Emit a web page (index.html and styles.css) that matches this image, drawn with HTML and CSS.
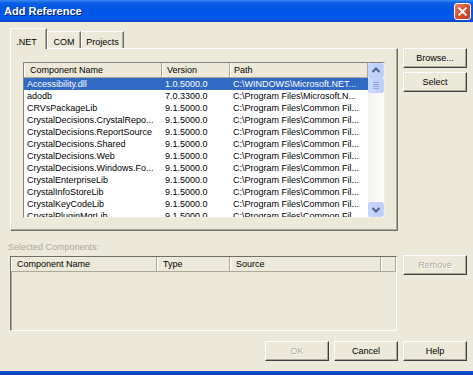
FILE: index.html
```html
<!DOCTYPE html>
<html lang="en">
<head>
  <meta charset="UTF-8" />
  <title>Add Reference</title>
  <link rel="stylesheet" href="styles.css">
</head>
<body>
  <div class="window">

    <!-- Title bar -->
    <div class="titlebar">
      <span class="title">Add Reference</span>
      <span class="close">
        <svg width="16" height="16" viewBox="0 0 16 16">
          <path d="M4.5 4.5 L11.5 11.5 M11.5 4.5 L4.5 11.5" stroke="#fff" stroke-width="2" stroke-linecap="square"/>
        </svg>
      </span>
    </div>

    <div class="upper">
      <div class="tabbox">
        <div class="tabs">
          <div class="tab active net">.NET</div>
          <div class="tab com">COM</div>
          <div class="tab projects">Projects</div>
        </div>
        <div class="panel">
          <div class="listview">
            <div class="lv-content">
              <div class="lv-header">
                <div class="hcell c-name">Component Name</div>
                <div class="hcell c-version">Version</div>
                <div class="hcell c-path">Path</div>
              </div>
              <div class="row selected">
                <div class="cell c-name">Accessibility.dll</div>
                <div class="cell c-version">1.0.5000.0</div>
                <div class="cell c-path">C:\WINDOWS\Microsoft.NET...</div>
              </div>
              <div class="row">
                <div class="cell c-name">adodb</div>
                <div class="cell c-version">7.0.3300.0</div>
                <div class="cell c-path">C:\Program Files\Microsoft.N...</div>
              </div>
              <div class="row">
                <div class="cell c-name">CRVsPackageLib</div>
                <div class="cell c-version">9.1.5000.0</div>
                <div class="cell c-path">C:\Program Files\Common Fil...</div>
              </div>
              <div class="row">
                <div class="cell c-name">CrystalDecisions.CrystalRepo...</div>
                <div class="cell c-version">9.1.5000.0</div>
                <div class="cell c-path">C:\Program Files\Common Fil...</div>
              </div>
              <div class="row">
                <div class="cell c-name">CrystalDecisions.ReportSource</div>
                <div class="cell c-version">9.1.5000.0</div>
                <div class="cell c-path">C:\Program Files\Common Fil...</div>
              </div>
              <div class="row">
                <div class="cell c-name">CrystalDecisions.Shared</div>
                <div class="cell c-version">9.1.5000.0</div>
                <div class="cell c-path">C:\Program Files\Common Fil...</div>
              </div>
              <div class="row">
                <div class="cell c-name">CrystalDecisions.Web</div>
                <div class="cell c-version">9.1.5000.0</div>
                <div class="cell c-path">C:\Program Files\Common Fil...</div>
              </div>
              <div class="row">
                <div class="cell c-name">CrystalDecisions.Windows.Fo...</div>
                <div class="cell c-version">9.1.5000.0</div>
                <div class="cell c-path">C:\Program Files\Common Fil...</div>
              </div>
              <div class="row">
                <div class="cell c-name">CrystalEnterpriseLib</div>
                <div class="cell c-version">9.1.5000.0</div>
                <div class="cell c-path">C:\Program Files\Common Fil...</div>
              </div>
              <div class="row">
                <div class="cell c-name">CrystalInfoStoreLib</div>
                <div class="cell c-version">9.1.5000.0</div>
                <div class="cell c-path">C:\Program Files\Common Fil...</div>
              </div>
              <div class="row">
                <div class="cell c-name">CrystalKeyCodeLib</div>
                <div class="cell c-version">9.1.5000.0</div>
                <div class="cell c-path">C:\Program Files\Common Fil...</div>
              </div>
              <div class="row">
                <div class="cell c-name">CrystalPluginMgrLib</div>
                <div class="cell c-version">9.1.5000.0</div>
                <div class="cell c-path">C:\Program Files\Common Fil...</div>
              </div>
            </div>

            <!-- Vertical scrollbar -->
            <div class="scrollbar">
              <div class="sb-btn">
                <svg width="14" height="13" viewBox="0 0 14 13">
                  <path d="M3.5 8 L7 4.5 L10.5 8" fill="none" stroke="#4d6185" stroke-width="2"/>
                </svg>
              </div>
              <div class="sb-thumb">
                <span></span><span></span><span></span><span></span>
              </div>
              <div class="sb-track"></div>
              <div class="sb-btn">
                <svg width="14" height="13" viewBox="0 0 14 13">
                  <path d="M3.5 5 L7 8.5 L10.5 5" fill="none" stroke="#4d6185" stroke-width="2"/>
                </svg>
              </div>
            </div>
          </div>
        </div>
      </div>

      <div class="side">
        <button class="btn">Browse...</button>
        <button class="btn">Select</button>
      </div>
    </div>

    <div class="label">Selected Components:</div>

    <div class="lower">
      <div class="listview2">
        <div class="lv-header">
          <div class="hcell s-name">Component Name</div>
          <div class="hcell s-type">Type</div>
          <div class="hcell s-source">Source</div>
          <div class="hcell s-fill"></div>
        </div>
      </div>
      <div class="side">
        <button class="btn remove" disabled>Remove</button>
      </div>
    </div>

    <div class="footer">
      <button class="btn ok" disabled>OK</button>
      <button class="btn">Cancel</button>
      <button class="btn">Help</button>
    </div>

    <div class="frame-bottom"></div>
  </div>
</body>
</html>
```

FILE: styles.css
```css
body {
  margin: 0;
  background-color: #ece9d8;
  font-family: "Liberation Sans", Arial, sans-serif;
  font-size: 9px;
  color: #000;
}

.window {
  width: 473px;
  height: 375px;
  overflow: hidden;
  background-color: #ece9d8;
}

/* Title bar */
.titlebar {
  height: 22px;
  display: flex;
  align-items: center;
  justify-content: space-between;
  background: linear-gradient(to bottom, #3d8ef5 0%, #0d61e4 12%, #0055e5 45%, #0059ee 80%, #0b4fd6 92%, #0a3ec0 100%);
}

.title {
  margin-left: 4px;
  color: #fff;
  font-weight: bold;
  font-size: 11px;
  text-shadow: 1px 1px #0a1c7a;
}

.close {
  width: 15px;
  height: 15px;
  margin-right: 2px;
  border: 1px solid #fff;
  border-radius: 3px;
  background: linear-gradient(135deg, #e8856a 0%, #d8542f 45%, #c23c17 100%);
  display: flex;
  align-items: center;
  justify-content: center;
}

.close svg {
  width: 15px;
  height: 15px;
}

/* Upper area: tabs + buttons */
.upper {
  display: flex;
  padding-left: 10px;
}

.tabbox {
  width: 388px;
}

.tabs {
  height: 26px;
  display: flex;
  align-items: flex-end;
}

.tab {
  box-sizing: border-box;
  height: 17px;
  padding-top: 4px;
  line-height: 12px;
  text-align: center;
  background-color: #ece9d8;
  border: 1px solid #fff;
  border-right-color: #716f64;
  border-bottom: none;
  box-shadow: inset -1px 0 #aca899;
}

.tab.active {
  position: relative;
  z-index: 1;
  height: 21px;
  margin-bottom: -1px;
  padding-top: 7px;
  padding-right: 4px;
}

.tab.net { width: 37px; }
.tab.com { width: 34px; }
.tab.projects { width: 43px; }

.panel {
  box-sizing: border-box;
  height: 183px;
  padding: 13px 0 0 12px;
  border: 1px solid #fff;
  border-right-color: #716f64;
  border-bottom-color: #716f64;
  box-shadow: inset -1px -1px #aca899;
}

/* Main list */
.listview {
  box-sizing: border-box;
  width: 362px;
  height: 156px;
  display: flex;
  background-color: #fff;
  border: 1px solid #828282;
  border-right-color: #f1efe2;
  border-bottom-color: #f1efe2;
  overflow: hidden;
}

.lv-content {
  flex: 1;
  overflow: hidden;
}

.lv-header {
  display: flex;
  height: 15px;
  background-color: #ece9d8;
  border-bottom: 1px solid #aca899;
  box-sizing: border-box;
}

.hcell {
  box-sizing: border-box;
  height: 14px;
  line-height: 14px;
  padding-left: 5px;
  border-left: 1px solid #fff;
  border-right: 1px solid #aca899;
  white-space: nowrap;
  overflow: hidden;
}

.row {
  display: flex;
  height: 12px;
  line-height: 12px;
}

.row.selected {
  background-color: #316ac5;
  color: #fff;
}

.cell {
  padding-left: 3px;
  white-space: nowrap;
  overflow: hidden;
  box-sizing: border-box;
}

.c-name { width: 138px; }
.c-version { width: 68px; }
.c-path { width: 138px; }

.lv-header .c-version { padding-left: 4px; }
.lv-header .c-path { padding-left: 3px; }

.scrollbar {
  width: 16px;
  display: flex;
  flex-direction: column;
  background: linear-gradient(to right, #f3f1ec, #fefefb);
}

.sb-btn {
  box-sizing: border-box;
  height: 15px;
  border: 1px solid #c3d3fd;
  border-radius: 2px;
  background: linear-gradient(to right, #c6d5fb, #b9cdf9);
  display: flex;
  align-items: center;
  justify-content: center;
}

.sb-thumb {
  box-sizing: border-box;
  height: 15px;
  border: 1px solid #c3d3fd;
  border-radius: 2px;
  background: linear-gradient(to right, #cddafc, #b9cdf9);
  display: flex;
  flex-direction: column;
  align-items: center;
  justify-content: center;
  gap: 1px;
}

.sb-thumb span {
  width: 6px;
  height: 1px;
  background-color: #8aa5e6;
}

.sb-track {
  flex: 1;
}

/* Side buttons */
.side {
  margin-left: 5px;
  padding-top: 26px;
  display: flex;
  flex-direction: column;
  gap: 4px;
}

.btn {
  box-sizing: border-box;
  width: 64px;
  height: 20px;
  padding: 0;
  font-family: "Liberation Sans", Arial, sans-serif;
  font-size: 9px;
  color: #000;
  background-color: #ece9d8;
  border: 1px solid #fff;
  border-right-color: #404040;
  border-bottom-color: #404040;
  box-shadow: inset -1px -1px #aca899;
}

.btn:disabled {
  color: #aca899;
  text-shadow: 1px 1px #fff;
}

/* Selected components */
.label {
  margin: 10px 0 3px 8px;
  height: 12px;
  line-height: 12px;
  color: #aca899;
}

.lower {
  display: flex;
  padding-left: 10px;
}

.lower .side {
  padding-top: 0;
  margin-top: -1px;
  margin-left: 6px;
}

.listview2 {
  box-sizing: border-box;
  width: 387px;
  height: 75px;
  border: 1px solid #716f64;
  border-right-color: #fff;
  border-bottom-color: #fff;
  box-shadow: inset 1px 1px #aca899;
}

.s-name { width: 146px; }
.s-type { width: 73px; }
.s-source { width: 151px; }
.s-fill { flex: 1; }

/* Footer buttons */
.footer {
  margin-top: 10px;
  padding-right: 6px;
  display: flex;
  justify-content: flex-end;
  gap: 5px;
}

.frame-bottom {
  margin-top: 10px;
  height: 4px;
  background: linear-gradient(to bottom, #0c52d8, #0a3cb8);
}
```
